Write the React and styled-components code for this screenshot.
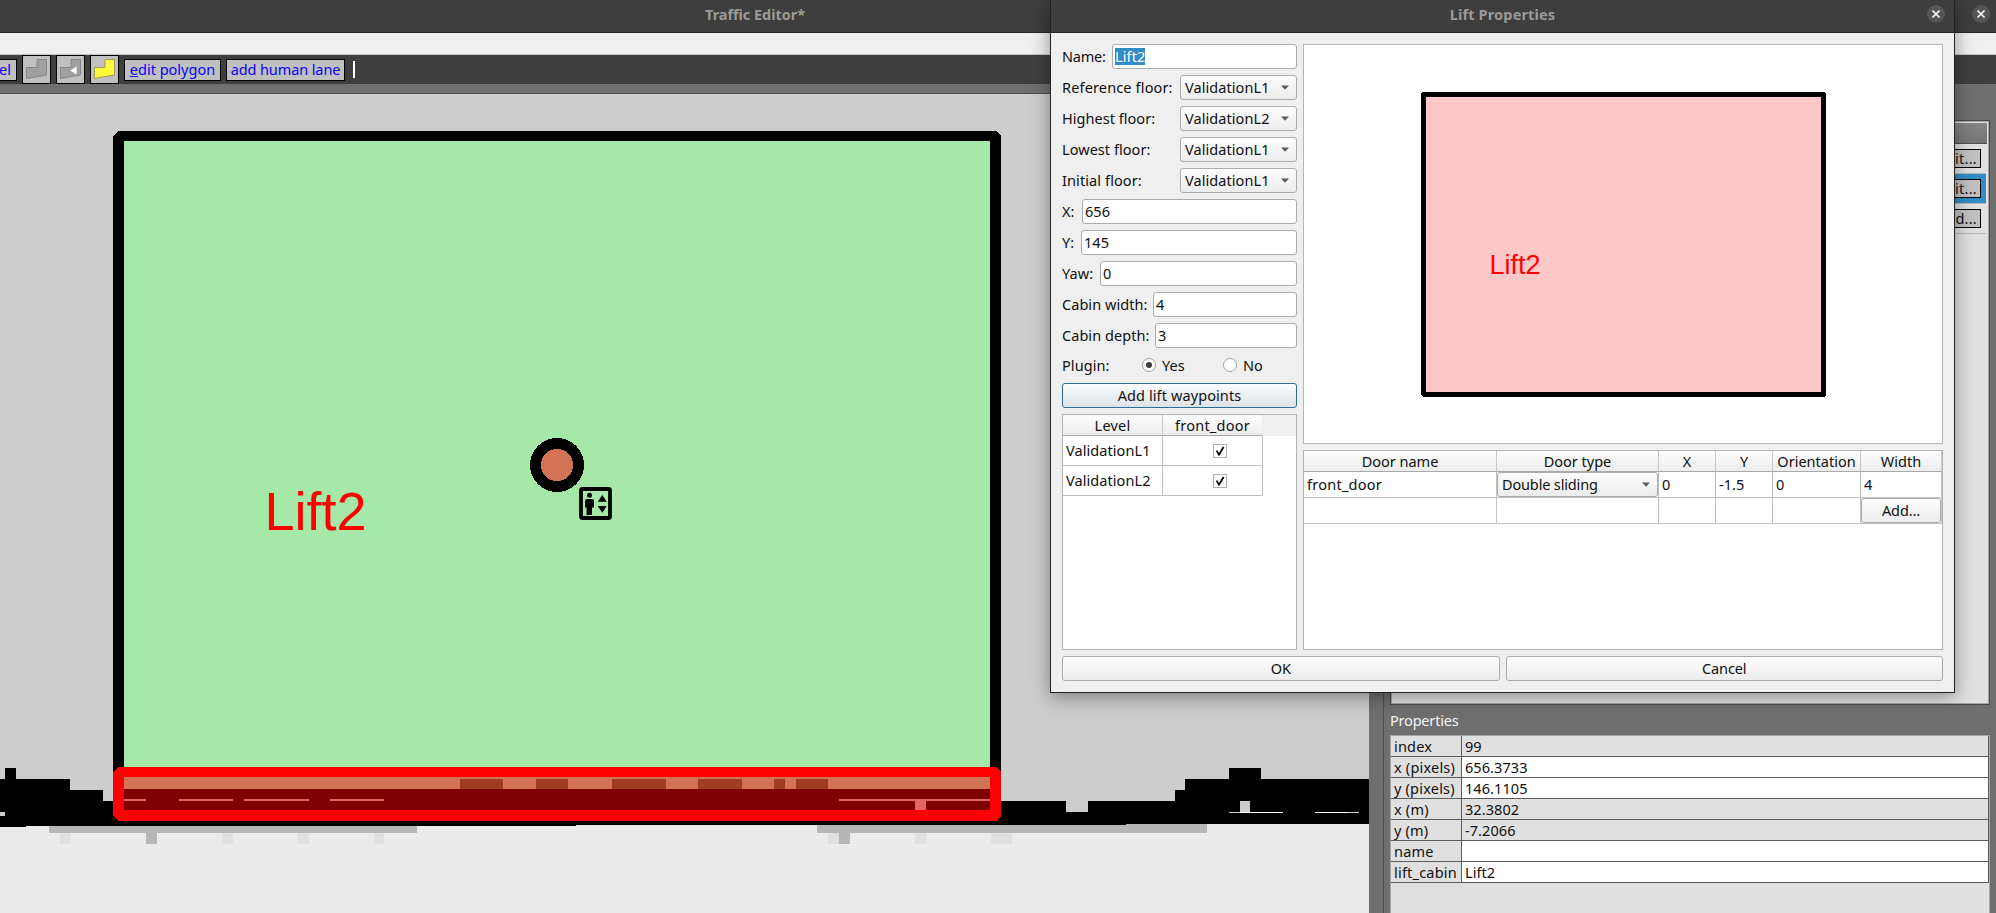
import React from 'react';
import styled, { createGlobalStyle, css } from 'styled-components';

const GlobalStyle = createGlobalStyle`
  * { box-sizing: border-box; }
  body { margin: 0; overflow: hidden; }
`;

const raised = css`
  background: linear-gradient(#fdfdfd, #ececec);
  border: 1px solid #ababab;
  border-radius: 3px;
`;

/* ---------- window chrome ---------- */

const Desktop = styled.div`
  position: relative;
  width: 1996px;
  height: 913px;
  overflow: hidden;
  background: #6f6f6f;
  font: 14.5px/20px 'Noto Sans', sans-serif;
  letter-spacing: 0.07px;
  color: #101010;
  white-space: nowrap;
`;

const MainWindow = styled.div`
  display: flex;
  flex-direction: column;
  height: 100%;
`;

const TitleBar = styled.header`
  display: flex;
  align-items: flex-start;
  flex: none;
  height: 33px;
  padding: 5px ${p => p.$edge}px 0 0;
  background: #3e3e3e;
  border-bottom: 1px solid #272727;
  color: #9c9a97;
  font-weight: 700;
`;

const Title = styled.div`
  width: ${p => p.$width}px;
  margin-right: auto;
  padding-left: ${p => p.$inset || 0}px;
  text-align: center;
  line-height: 19px;
  letter-spacing: ${p => p.$track}px;
`;

const CloseButton = styled.button`
  display: grid;
  place-items: center;
  flex: none;
  width: 18px;
  height: 18px;
  padding: 0;
  border: 0;
  border-radius: 50%;
  background: #565656;
`;

const MenuBar = styled.div`
  flex: none;
  height: 22px;
  background: #efefef;
  border-bottom: 1px solid #c4c4c4;
`;

const Toolbar = styled.div`
  display: flex;
  align-items: center;
  gap: 5px;
  flex: none;
  height: 29px;
  background: #3f3f3f;
`;

const ToolText = styled.button`
  width: ${p => p.$width}px;
  height: 22px;
  padding: 0 0 2px;
  border: 1px solid #000;
  ${p => p.$cut && 'border-left: 0; text-align: left; text-indent: -1px;'}
  background: #c0c0c0;
  color: #0c00f5;
  font: inherit;
  letter-spacing: ${p => p.$track || 0}px;
  line-height: 18px;
`;

const ToolIcon = styled.button`
  width: 29px;
  height: 29px;
  padding: 0;
  border: 1px solid #000;
  background: #c0c0c0;
  svg { display: block; }
`;

const ToolCaret = styled.div`
  width: 2px;
  height: 17px;
  margin-left: 3px;
  background: #fff;
`;

const Workspace = styled.div`
  display: flex;
  flex: 1;
  min-height: 0;
  padding-top: 9px;
`;

const CanvasView = styled.div`
  flex: none;
  width: 1369px;
  border-top: 1px solid #505050;
  svg { display: block; }
`;

/* ---------- side dock ---------- */

const Dock = styled.aside`
  display: flex;
  flex-direction: column;
  flex: 1;
  margin-left: 14px;
  padding: 27px 6px 0 6px;
  border-left: 1px solid #505050;
`;

const LevelPanel = styled.div`
  flex: none;
  height: 585px;
  border: 1px solid #4a4a4a;
  padding-right: 2px;
  box-shadow: inset 0 0 0 1px #a6a6a6;
  background: #e0e0e0;
  overflow: hidden;
`;

const LevelHeader = styled.div`
  height: 21px;
  margin-top: 2px;
  background: linear-gradient(#858585, #757575);
  border-bottom: 1px solid #505050;
`;

const LevelRow = styled.div`
  display: flex;
  align-items: center;
  justify-content: flex-end;
  height: 30px;
  padding: 0 5px 1px 0;
  margin-right: 1px;
  border-bottom: 1px solid #b9b9b9;
  background: ${p => (p.$selected ? '#308cc6' : '#e0e0e0')};
`;

const LevelButton = styled.button`
  width: 60px;
  height: 19px;
  padding: 0 3px 2px 0;
  border: 1px solid #000;
  background: #c0c0c0;
  color: #111;
  font: inherit;
  letter-spacing: 0.25px;
  line-height: 17px;
  text-align: right;
`;

const DockTitle = styled.div`
  flex: none;
  height: 30px;
  padding-top: 5px;
  color: #f4f4f4;
  letter-spacing: -0.2px;
`;

const PropertyTable = styled.div`
  flex: 1;
  border: 1px solid #a6a6a6;
  border-bottom: 0;
  background: #e0e0e0;
`;

const PropertyRow = styled.div`
  display: grid;
  grid-template: 100% / 71px 1fr;
  height: 21px;
  border-right: 1px solid #5c5c5c;
  border-bottom: 1px solid #5c5c5c;
  line-height: 20px;
`;

const PropertyKey = styled.div`
  padding-left: 3px;
  border-right: 1px solid #5c5c5c;
  letter-spacing: 0.2px;
`;

const PropertyValue = styled.div`
  padding-left: 3px;
  background: ${p => (p.$editable ? '#fff' : '#e0e0e0')};
`;

/* ---------- lift dialog ---------- */

const Dialog = styled.section`
  position: absolute;
  left: 1050px;
  top: 0;
  width: 905px;
  height: 693px;
  border: 1px solid #242424;
  border-top: 0;
  background: #efefef;
  box-shadow: 0 4px 18px rgba(0, 0, 0, 0.38);
`;

const DialogBody = styled.div`
  display: flex;
  flex-direction: column;
  gap: 6px;
  padding: 11px;
`;

const Columns = styled.div`
  display: flex;
  gap: 6px;
  height: 606px;
`;

const Form = styled.div`
  display: flex;
  flex-direction: column;
  gap: 6px;
  width: 235px;
`;

const FormRow = styled.label`
  display: flex;
  align-items: center;
  justify-content: space-between;
  height: 25px;
  line-height: 25px;
  letter-spacing: ${p => p.$track ?? 0.05}px;
`;

const Field = styled.div`
  width: ${p => p.$width}px;
  height: 25px;
  padding: 0 2px;
  border: 1px solid #ababab;
  border-radius: 3px;
  background: #fff;
  line-height: 22px;
`;

const Selected = styled.span`
  display: inline-block;
  height: 17px;
  line-height: 17px;
  background: #308cc6;
  color: #fff;
  letter-spacing: 0.1px;
`;

const Combo = styled.div`
  ${raised}
  display: flex;
  align-items: center;
  justify-content: space-between;
  width: ${p => p.$width}px;
  height: 25px;
  padding: 0 7px 0 4px;
  line-height: 23px;
  letter-spacing: ${p => p.$track ?? 0.07}px;
`;

const PluginRow = styled.div`
  display: grid;
  grid-template-columns: 80px 81px 1fr;
  align-items: center;
  height: 23px;
  padding-bottom: 1px;
`;

const RadioLabel = styled.label`
  display: flex;
  align-items: center;
  gap: 6px;
`;

const Radio = styled.span`
  display: grid;
  place-items: center;
  width: 14px;
  height: 14px;
  border: 1px solid #a3a3a3;
  border-radius: 50%;
  background: #fff;
  &::after {
    content: '';
    width: 6px;
    height: 6px;
    border-radius: 50%;
    background: ${p => (p.$on ? '#3c3c3c' : 'transparent')};
  }
`;

const Button = styled.button`
  ${raised}
  flex: ${p => (p.$grow ? 1 : 'none')};
  height: 25px;
  padding: 0 0 1px;
  color: #111;
  font: inherit;
  line-height: 22px;
  letter-spacing: ${p => p.$track ?? -0.1}px;
  ${p => p.$primary && css`
    border-color: #2a6f9c;
    background: linear-gradient(#fbfcfd, #dce3e9);
  `}
`;

const ButtonRow = styled.div`
  display: flex;
  gap: 6px;
`;

const Frame = styled.div`
  flex: ${p => (p.$height ? 'none' : 1)};
  ${p => p.$height && `height: ${p.$height}px;`}
  border: 1px solid #b4b4b4;
  background: #fff;
  svg { display: block; }
`;

const Details = styled.div`
  display: flex;
  flex-direction: column;
  gap: 6px;
  width: 640px;
`;

const HeaderRow = styled.div`
  display: grid;
  grid-template: 100% / ${p => p.$columns};
  height: 21px;
  background: #efefef;
`;

const HeaderCell = styled.div`
  border-right: 1px solid ${p => (p.$last ? '#eee' : '#c8c8c8')};
  border-bottom: 1px solid #a9a9a9;
  background: linear-gradient(#fdfdfd, #ececec);
  text-align: center;
  line-height: 20px;
  letter-spacing: ${p => p.$track ?? 0}px;
`;

const BodyRow = styled.div`
  display: grid;
  grid-template: 100% / ${p => p.$columns};
  height: ${p => p.$height}px;
  line-height: 20px;
`;

const Cell = styled.div`
  display: flex;
  align-items: center;
  justify-content: ${p => (p.$center ? 'center' : 'flex-start')};
  padding: ${p => (p.$flush ? '0' : p.$center ? '0 0 0 3px' : '0 0 1px 3px')};
  border-right: 1px solid #c0c0c0;
  border-bottom: 1px solid #c0c0c0;
  letter-spacing: ${p => p.$track ?? 0.07}px;
`;

const CheckBox = styled.span`
  display: grid;
  place-items: center;
  width: 14px;
  height: 14px;
  margin-left: 12px;
  border: 1px solid #b0b0b0;
  background: #fff;
`;

/* ---------- drawings ---------- */

const CloseIcon = () => (
  <svg width="10" height="10" viewBox="0 0 10 10">
    <path d="M1.5 1.5l7 7M8.5 1.5l-7 7" stroke="#fff" strokeWidth="1.6" />
  </svg>
);

const Arrow = () => (
  <svg width="8" height="5" viewBox="0 0 8 5">
    <path d="M0 .5h8L4 4.8z" fill="#5a5a5a" />
  </svg>
);

const Tick = () => (
  <svg width="10" height="10" viewBox="0 0 10 10">
    <path d="M1.6 4.6l2.4 4L8.6 1" fill="none" stroke="#000" strokeWidth="1.8" />
  </svg>
);

const PolygonIcon = ({ fill, line, pointer }) => (
  <svg width="27" height="27" viewBox="0 0 27 27">
    <path d="M3.5 11.5h10.5v-8h9.500v15.500l-20 3.500z" fill={fill} stroke={line} />
    {pointer && <path d="M20 10v9l-7.500-4.500z" fill="#fff" stroke="#8a8a8a" strokeWidth=".5" />}
  </svg>
);

const Blocks = ({ fill, rects }) => (
  <g fill={fill}>
    {rects.map(([x0, y0, x1, y1], i) => (
      <rect key={i} x={x0} y={y0} width={x1 - x0} height={y1 - y0} />
    ))}
  </g>
);

const FloorPlan = () => (
  <svg width="1369" height="819" viewBox="0 94 1369 819" shapeRendering="crispEdges">
    <rect y="94" width="1369" height="819" fill="#cdcdcd" />
    <rect y="824" width="1369" height="89" fill="#ebebeb" />
    <Blocks fill="#b7b7b7" rects={[
      [49, 826, 417, 833], [146, 833, 157, 844], [817, 824, 1207, 833], [839, 833, 850, 844],
    ]} />
    <Blocks fill="#e0e0e0" rects={[
      [60, 833, 70, 844], [222, 833, 233, 844], [298, 833, 309, 844], [374, 833, 384, 844],
      [828, 833, 839, 844], [915, 833, 926, 844], [991, 833, 1012, 844],
    ]} />
    <Blocks fill="#000" rects={[
      [5, 768, 16, 779], [0, 779, 70, 826], [0, 826, 26, 827], [70, 790, 103, 826],
      [103, 801, 576, 826], [576, 801, 1126, 825], [1126, 801, 1369, 824],
      [1175, 790, 1185, 801], [1185, 779, 1369, 801], [1229, 768, 1261, 779],
    ]} />
    <Blocks fill="#cdcdcd" rects={[
      [0, 812, 5, 816], [1066, 801, 1088, 812], [1240, 801, 1250, 812],
      [1229, 812, 1240, 813], [1348, 812, 1359, 813],
    ]} />
    <Blocks fill="#fff" rects={[[1240, 812, 1283, 813], [1315, 812, 1348, 813]]} />

    <path d="M118 131H996L1001 136V816H113V136z" fill="#000" />
    <rect x="124" y="141" width="866" height="640" fill="#a6e8a7" />

    <path d="M118 767H996L1001 772V816L996 821H118L113 816V772z" fill="#f00" />
    <rect x="124" y="777" width="866" height="12" fill="#d27355" />
    <rect x="124" y="789" width="866" height="21" fill="#800000" />
    <Blocks fill="#a03c21" rects={[
      [460, 779, 503, 789], [536, 779, 568, 789], [612, 779, 666, 789],
      [698, 779, 742, 789], [774, 779, 785, 789], [796, 779, 828, 789],
    ]} />
    <Blocks fill="#e66464" rects={[
      [124, 799, 146, 801], [179, 799, 233, 801], [244, 799, 309, 801],
      [330, 799, 384, 801], [839, 799, 990, 801], [915, 801, 926, 810],
    ]} />

    <circle cx="557" cy="465" r="21.500" fill="#d27355" stroke="#000" strokeWidth="11" />

    <g shapeRendering="auto">
      <rect x="581" y="489" width="29" height="29" rx="1.500" fill="none" stroke="#000" strokeWidth="3.800" />
      <circle cx="589.500" cy="495.200" r="2.500" />
      <path d="M587 499h5q2 0 2 2v6.500h-2V515h-5.500v-7.500h-1.500V501q0-2 2-2zM602.300 495l4.400 6.700h-8.900zM602.300 512.800l4.400-6.700h-8.900z" />
    </g>
    <text x="264.500" y="530" fill="#f00" fontFamily="'Liberation Sans', sans-serif" fontSize="54" letterSpacing="0">Lift2</text>
  </svg>
);

const CabinPreview = () => (
  <svg width="638" height="398" viewBox="1304 45 638 398" shapeRendering="crispEdges">
    <path d="M1422 92H1825L1826 94V395L1824 397H1423L1421 395V93z" fill="#000" />
    <rect x="1426" y="97" width="395" height="295" fill="#ffc8c8" />
    <text x="1489.500" y="274" fill="#f00" fontFamily="'Liberation Sans', sans-serif" fontSize="27" letterSpacing="0">Lift2</text>
  </svg>
);

/* ---------- data ---------- */

const floors = [
  ['Reference floor:', 'ValidationL1', 0.15],
  ['Highest floor:', 'ValidationL2', 0.03],
  ['Lowest floor:', 'ValidationL1', 0.05],
  ['Initial floor:', 'ValidationL1', 0.1],
];

const numbers = [
  ['X:', '656', 215],
  ['Y:', '145', 216],
  ['Yaw:', '0', 197],
  ['Cabin width:', '4', 144],
  ['Cabin depth:', '3', 142],
];

const properties = [
  ['index', '99', false],
  ['x (pixels)', '656.3733', true],
  ['y (pixels)', '146.1105', true],
  ['x (m)', '32.3802', false],
  ['y (m)', '-7.2066', false],
  ['name', '', true],
  ['lift_cabin', 'Lift2', true],
];

const levelColumns = '100px 100px';
const doorColumns = '193px 162px 57px 57px 88px 81px';
const doorHeads = ['Door name', 'Door type', 'X', 'Y', 'Orientation', 'Width'];

export default function App() {
  return (
    <Desktop>
      <GlobalStyle />
      <MainWindow>
        <TitleBar $edge={6}>
          <Title $width={1510} $track={-0.05}>Traffic Editor*</Title>
          <CloseButton><CloseIcon /></CloseButton>
        </TitleBar>
        <MenuBar />
        <Toolbar>
          <ToolText $width={17} $cut>el</ToolText>
          <ToolIcon><PolygonIcon fill="#a0a0a0" line="#868686" /></ToolIcon>
          <ToolIcon><PolygonIcon fill="#a0a0a0" line="#868686" pointer /></ToolIcon>
          <ToolIcon><PolygonIcon fill="#fffb38" line="#a09a50" /></ToolIcon>
          <ToolText $width={97}><u>e</u>dit polygon</ToolText>
          <ToolText $width={119} $track={-0.1}>add human lane</ToolText>
          <ToolCaret />
        </Toolbar>
        <Workspace>
          <CanvasView><FloorPlan /></CanvasView>
          <Dock>
            <LevelPanel>
              <LevelHeader />
              <LevelRow><LevelButton>Edit...</LevelButton></LevelRow>
              <LevelRow $selected><LevelButton>Edit...</LevelButton></LevelRow>
              <LevelRow><LevelButton>Add...</LevelButton></LevelRow>
            </LevelPanel>
            <DockTitle>Properties</DockTitle>
            <PropertyTable>
              {properties.map(([key, value, editable]) => (
                <PropertyRow key={key}>
                  <PropertyKey>{key}</PropertyKey>
                  <PropertyValue $editable={editable}>{value}</PropertyValue>
                </PropertyRow>
              ))}
            </PropertyTable>
          </Dock>
        </Workspace>
      </MainWindow>

      <Dialog>
        <TitleBar $edge={9}>
          <Title $width={876} $inset={27} $track={0.15}>Lift Properties</Title>
          <CloseButton><CloseIcon /></CloseButton>
        </TitleBar>
        <DialogBody>
          <Columns>
            <Form>
              <FormRow $track={-0.2}>Name:<Field $width={185}><Selected>Lift2</Selected></Field></FormRow>
              {floors.map(([label, value, track]) => (
                <FormRow key={label} $track={track}>{label}<Combo $width={117}>{value}<Arrow /></Combo></FormRow>
              ))}
              {numbers.map(([label, value, width]) => (
                <FormRow key={label}>{label}<Field $width={width}>{value}</Field></FormRow>
              ))}
              <PluginRow>
                Plugin:
                <RadioLabel><Radio $on />Yes</RadioLabel>
                <RadioLabel><Radio />No</RadioLabel>
              </PluginRow>
              <Button $primary $track={0.1}>Add lift waypoints</Button>
              <Frame>
                <HeaderRow $columns={levelColumns}>
                  <HeaderCell $track={0.2}>Level</HeaderCell>
                  <HeaderCell $track={0.25} $last>front_door</HeaderCell>
                </HeaderRow>
                {['ValidationL1', 'ValidationL2'].map(level => (
                  <BodyRow key={level} $columns={levelColumns} $height={30}>
                    <Cell>{level}</Cell>
                    <Cell $center><CheckBox><Tick /></CheckBox></Cell>
                  </BodyRow>
                ))}
              </Frame>
            </Form>
            <Details>
              <Frame $height={400}><CabinPreview /></Frame>
              <Frame>
                <HeaderRow $columns={doorColumns}>
                  {doorHeads.map(head => <HeaderCell key={head}>{head}</HeaderCell>)}
                </HeaderRow>
                <BodyRow $columns={doorColumns} $height={26}>
                  <Cell $track={0.25}>front_door</Cell>
                  <Cell $flush><Combo $width={161} $track={-0.15}>Double sliding<Arrow /></Combo></Cell>
                  <Cell>0</Cell>
                  <Cell>-1.5</Cell>
                  <Cell>0</Cell>
                  <Cell>4</Cell>
                </BodyRow>
                <BodyRow $columns={doorColumns} $height={26}>
                  <Cell /><Cell /><Cell /><Cell /><Cell />
                  <Cell $flush><Button $grow>Add...</Button></Cell>
                </BodyRow>
              </Frame>
            </Details>
          </Columns>
          <ButtonRow>
            <Button $grow>OK</Button>
            <Button $grow>Cancel</Button>
          </ButtonRow>
        </DialogBody>
      </Dialog>
    </Desktop>
  );
}
